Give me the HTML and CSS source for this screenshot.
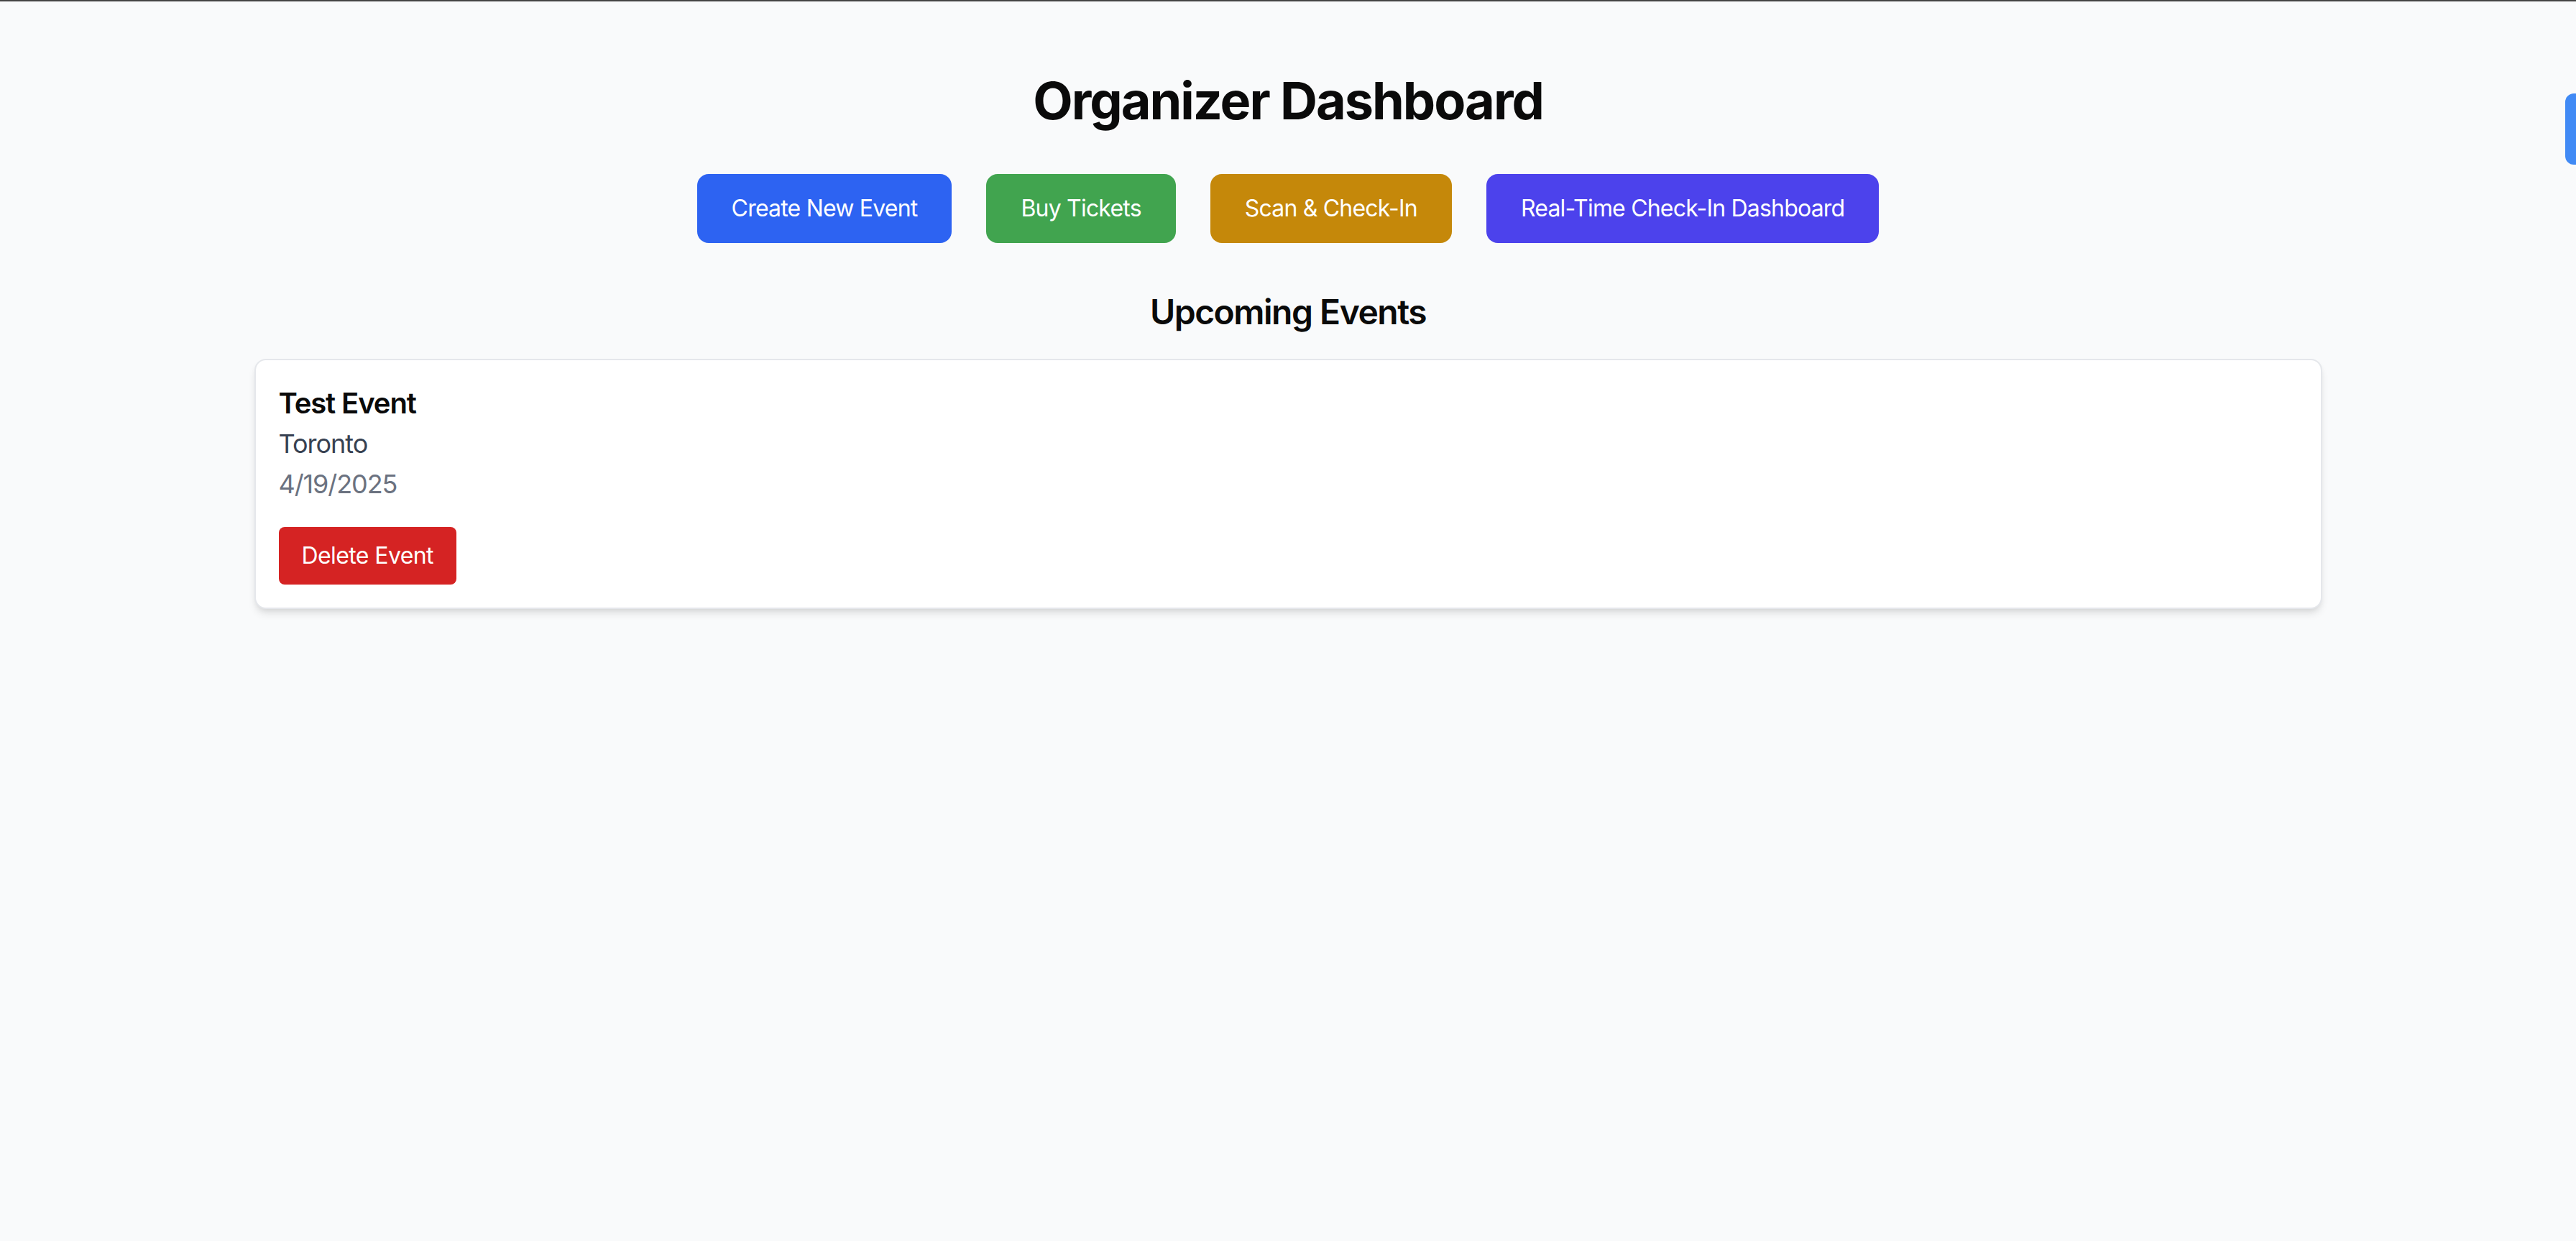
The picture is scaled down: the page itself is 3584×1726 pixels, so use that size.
FILE: index.html
```html
<!DOCTYPE html>
<html lang="en">
<head>
<meta charset="utf-8">
<title>Organizer Dashboard</title>
<link rel="stylesheet" href="styles.css">
</head>
<body>
<div class="topline"></div>
<main class="page">
  <h1 class="title">Organizer Dashboard</h1>
  <nav class="actions">
    <button class="btn btn-blue">Create New Event</button>
    <button class="btn btn-green">Buy Tickets</button>
    <button class="btn btn-gold">Scan &amp; Check-In</button>
    <button class="btn btn-indigo">Real-Time Check-In Dashboard</button>
  </nav>
  <h2 class="section-title">Upcoming Events</h2>
  <section class="events">
    <article class="event-card">
      <h3 class="event-name">Test Event</h3>
      <p class="event-location">Toronto</p>
      <p class="event-date">4/19/2025</p>
      <button class="btn-delete">Delete Event</button>
    </article>
  </section>
</main>
<div class="side-tab"></div>
</body>
</html>
```

FILE: styles.css
```css
* {
  box-sizing: border-box;
}

html, body {
  margin: 0;
  padding: 0;
}

body {
  background: #f9fafb;
  font-family: Inter, "Noto Sans", "Liberation Sans", sans-serif;
  color: #0a0a0a;
  min-height: 1726px;
}

.topline {
  height: 2px;
  background: #444444;
}

.page {
  padding-top: 98px;
  display: flex;
  flex-direction: column;
  align-items: center;
}

.title {
  margin: 0 0 62px;
  font-size: 72px;
  line-height: 80px;
  font-weight: 700;
  letter-spacing: -2px;
}

.actions {
  display: flex;
  gap: 48px;
  margin-bottom: 64px;
}

.btn {
  border: none;
  border-radius: 16px;
  padding: 24px 48px;
  font-family: inherit;
  font-size: 32px;
  line-height: 48px;
  letter-spacing: -0.8px;
  color: #ffffff;
}

.btn-blue { background: #2d63f2; }
.btn-green { background: #41a44f; }
.btn-gold { background: #c5880a; }
.btn-indigo { background: #4c42ec; }

.section-title {
  margin: 0 0 33px;
  font-size: 48px;
  line-height: 64px;
  font-weight: 600;
  letter-spacing: -1.5px;
}

.events {
  width: 2877px;
  display: flex;
  flex-direction: column;
}

.event-card {
  background: #ffffff;
  border: 2px solid #e5e7eb;
  border-radius: 16px;
  padding: 32px;
  box-shadow: 0 8px 12px -2px rgba(0, 0, 0, 0.1), 0 4px 8px -4px rgba(0, 0, 0, 0.1);
  display: flex;
  flex-direction: column;
  align-items: flex-start;
}

.event-name {
  margin: 0;
  font-size: 40px;
  line-height: 56px;
  font-weight: 600;
  letter-spacing: -1.1px;
}

.event-location {
  margin: 0;
  font-size: 36px;
  line-height: 56px;
  letter-spacing: -1px;
  color: #374151;
}

.event-date {
  margin: 0;
  font-size: 36px;
  line-height: 56px;
  letter-spacing: -1.1px;
  color: #6b7280;
}

.btn-delete {
  margin-top: 32px;
  border: none;
  border-radius: 8px;
  padding: 16px 32px;
  background: #d52323;
  color: #ffffff;
  font-family: inherit;
  font-size: 32px;
  line-height: 48px;
  letter-spacing: -0.6px;
}

.side-tab {
  position: fixed;
  right: 0;
  top: 130px;
  width: 15px;
  height: 99px;
  background: #418af5;
  border-radius: 12px 0 0 12px;
}
```
